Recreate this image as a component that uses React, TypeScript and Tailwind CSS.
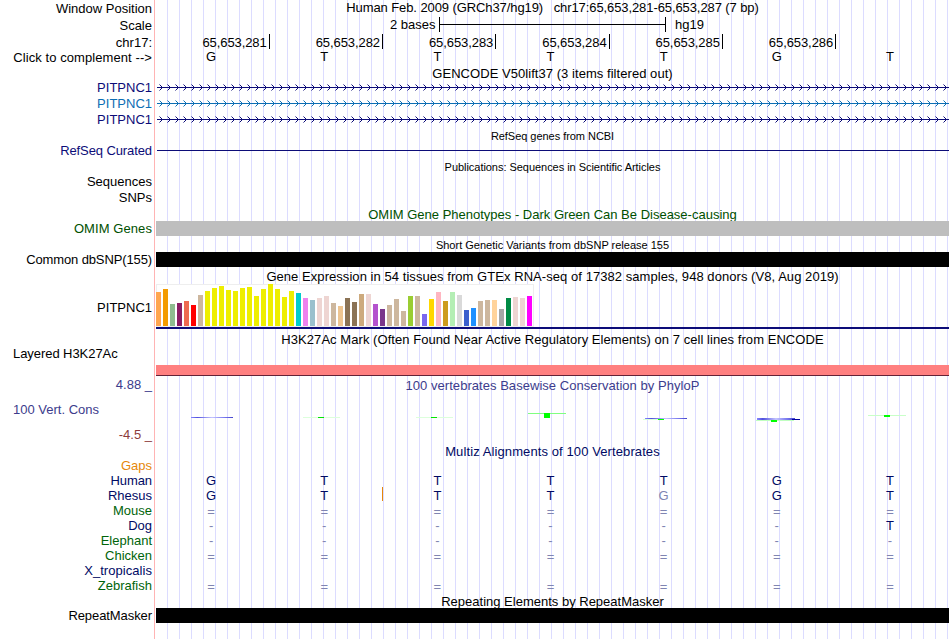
import React from "react";

const LABELS: [string, string][] = [
  ["Window Position", "mt-px"],
  ["Scale", "mt-[2px]"],
  ["chr17:", "mt-[2px]"],
  ["Click to complement -->", "tracking-[0.08px]"],
  ["PITPNC1", "mt-[15px] text-[#0c0c78]"],
  ["PITPNC1", "mt-px text-[#0c6eb4]"],
  ["PITPNC1", "mt-px text-[#0c0c78]"],
  ["RefSeq Curated", "mt-4 tracking-[-0.1px] text-[#0c0c78]"],
  ["Sequences", "mt-4"],
  ["SNPs", "mt-px"],
  ["OMIM Genes", "mt-4 tracking-[0.08px] text-[#005000]"],
  ["Common dbSNP(155)", "mt-4 tracking-[-0.12px]"],
  ["PITPNC1", "mt-[33px]"],
  ["Layered H3K27Ac", "mt-[31px] self-start tracking-[-0.06px]"],
  ["4.88 _", "mt-4 text-[#3c3c8c]"],
  ["100 Vert. Cons", "mt-2.5 self-start text-[#3c3c8c]"],
  ["-4.5 _", "mt-2.5 text-[#8c3c3c]"],
  ["Gaps", "mt-4 text-[#e6870a]"],
  ["Human", "tracking-[-0.1px] text-[#000a64]"],
  ["Rhesus", "text-[#000a64]"],
  ["Mouse", "text-[#00640a]"],
  ["Dog", "text-[#000a64]"],
  ["Elephant", "text-[#00640a]"],
  ["Chicken", "text-[#00640a]"],
  ["X_tropicalis", "tracking-[0.05px] text-[#000a64]"],
  ["Zebrafish", "text-[#00640a]"],
  ["RepeatMasker", "mt-[15px] tracking-[-0.08px]"],
];

const GTEX: [number, string][] = [
  [34, "#ffa54f"], [37, "#f39b00"], [22, "#8fbc8f"], [23, "#8b1c62"], [25, "#ee6a50"], [21, "#ff0000"], [31, "#cdb79e"],
  [35, "#eeee00"], [38, "#eeee00"], [40, "#eeee00"], [36, "#eeee00"], [35, "#eeee00"], [38, "#eeee00"], [39, "#eeee00"],
  [30, "#eeee00"], [37, "#eeee00"], [42, "#eeee00"], [37, "#eeee00"], [29, "#eeee00"], [35, "#eeee00"], [33, "#00cdcd"],
  [28, "#ee82ee"], [26, "#9ac0cd"], [28, "#eed5d2"], [30, "#eed5d2"], [23, "#cdb79e"], [20, "#eec591"], [28, "#8b7355"],
  [24, "#8b7355"], [32, "#cdaa7d"], [32, "#eed5d2"], [22, "#b452cd"], [17, "#7a378b"], [21, "#cdb79e"], [27, "#cdb79e"],
  [15, "#cdb79e"], [30, "#9acd32"], [30, "#cdb79e"], [12, "#7a67ee"], [27, "#ffd700"], [34, "#ffb6c1"], [25, "#cd9b1d"],
  [34, "#b4eeb4"], [31, "#d9d9d9"], [16, "#3a5fcd"], [18, "#1e90ff"], [25, "#cdb79e"], [26, "#cdb79e"], [26, "#ffd39b"],
  [17, "#a6a6a6"], [28, "#008b45"], [29, "#eed5d2"], [28, "#eed5d2"], [30, "#ff00ff"],
];

function Title({ children, className }: { children: React.ReactNode; className: string }) {
  return <div className={`h-[15px] text-center leading-[15px] whitespace-pre ${className}`}>{children}</div>;
}

function Bases({ seq, className }: { seq: string; className: string }) {
  return (
    <div className={`grid h-[15px] grid-cols-7 pr-px ${className}`}>
      {seq.split("").map((base, i) => (
        <span
          key={i}
          className={`pr-[3px] text-center ${base === "=" ? "pt-px text-[#8085b2]" : ""} ${
            base === "-" || base === "g" ? "text-[#8085b2]" : ""
          }`}
        >
          {base.toUpperCase()}
        </span>
      ))}
    </div>
  );
}

function Gene({ id, className }: { id: string; className: string }) {
  return (
    <svg width="793" height="7" className={`block ${className}`} shapeRendering="crispEdges">
      <defs>
        <pattern id={id} width="8" height="7" patternUnits="userSpaceOnUse">
          <path d="M3 0h1v1h-1zM3 6h1v1h-1z" fill="currentColor" opacity="0.5" />
          <path d="M4 1h1v1h-1zM5 2h1v1h-1zM6 3h1v1h-1zM5 4h1v1h-1zM4 5h1v1h-1z" fill="currentColor" />
        </pattern>
      </defs>
      <rect x="1" y="3" width="792" height="1" fill="currentColor" />
      <rect width="793" height="7" fill={`url(#${id})`} />
    </svg>
  );
}

function Conservation() {
  return (
    <svg width="793" height="20" className="mt-3 block" shapeRendering="crispEdges">
      <defs>
        <linearGradient id="dip">
          <stop offset="0" stopColor="#8888ff" />
          <stop offset="0.15" stopColor="#5050dd" />
          <stop offset="0.5" stopColor="#c4c4ff" />
          <stop offset="0.8" stopColor="#7777ee" />
          <stop offset="1" stopColor="#4444cc" />
        </linearGradient>
      </defs>
      <rect x="35" y="8" width="42" height="1" fill="url(#dip)" />
      <rect x="147" y="8" width="37" height="1" fill="#dcffdc" />
      <rect x="162" y="8" width="6" height="1" fill="#00e600" />
      <rect x="260" y="8" width="37" height="1" fill="#dcffdc" />
      <rect x="275" y="8" width="6" height="1" fill="#00e600" />
      <rect x="372" y="4" width="38" height="1" fill="#80ff80" />
      <rect x="388" y="4" width="6" height="5" fill="#00ff00" />
      <rect x="489" y="9" width="42" height="1" fill="url(#dip)" />
      <rect x="487" y="10" width="20" height="1" fill="#dcffdc" />
      <rect x="502" y="10" width="6" height="1" fill="#00ff00" />
      <rect x="601" y="9" width="38" height="2" fill="url(#dip)" />
      <rect x="636" y="10" width="8" height="1" fill="#0000a0" />
      <rect x="600" y="11" width="38" height="1" fill="#c0ffc0" />
      <rect x="615" y="11" width="6" height="2" fill="#00ff00" />
      <rect x="712" y="6" width="38" height="1" fill="#c8ffc8" />
      <rect x="728" y="6" width="6" height="2" fill="#00ff00" />
    </svg>
  );
}

export default function App() {
  return (
    <div className="flex h-[639px] w-[950px] overflow-hidden bg-white font-['Liberation_Sans',Arial,sans-serif] text-[13px] leading-[15px] text-black">
      <div className="flex w-[154px] shrink-0 flex-col items-end pr-[2px] pl-[13px]">
        {LABELS.map(([text, cls], i) => (
          <div key={i} className={`h-[15px] shrink-0 whitespace-pre ${cls}`}>
            {text}
          </div>
        ))}
      </div>
      <div className="mr-px w-px shrink-0 bg-[#ffb4b4]" />
      <div className="flex w-[793px] shrink-0 flex-col bg-[linear-gradient(to_right,transparent_11px,#dcdcff_11px)] bg-[length:12px_1px]">
        <Title className="tracking-[-0.09px]">
          {"Human Feb. 2009 (GRCh37/hg19)   chr17:65,653,281-65,653,287 (7 bp)"}
        </Title>
        <div className="mt-[2px] flex h-[15px] items-center pl-[234px]">
          <span className="w-[49px]">2 bases</span>
          <span className="flex h-[15px] w-[227px] items-center border-x border-black">
            <span className="h-px w-full bg-black" />
          </span>
          <span className="pl-[9px]">hg19</span>
        </div>
        <div className="mt-[2px] mr-[0.6px] -ml-[0.6px] grid h-[15px] grid-cols-7">
          {[1, 2, 3, 4, 5, 6].map((n) => (
            <div key={n} className="-mr-px flex justify-end">
              <span className="mt-px pr-[2px] tracking-[-0.08px]">65,653,28{n}</span>
              <span className="h-[15px] w-px bg-black" />
            </div>
          ))}
        </div>
        <Bases seq="GTTTTGT" className="" />
        <Title className="mt-[2px] tracking-[0.05px]">GENCODE V50lift37 (3 items filtered out)</Title>
        <Gene id="gene-a" className="mt-[3px] text-[#0c0c78]" />
        <Gene id="gene-b" className="mt-[9px] text-[#0c6eb4]" />
        <Gene id="gene-c" className="mt-[9px] text-[#0c0c78]" />
        <Title className="mt-[6px] text-[11px] tracking-[-0.04px]">RefSeq genes from NCBI</Title>
        <div className="mt-[6px] ml-px h-px bg-[#0c0c78]" />
        <Title className="mt-[9px] text-[11px] tracking-[-0.04px]">Publications: Sequences in Scientific Articles</Title>
        <Title className="mt-[32px] text-[#005000]">OMIM Gene Phenotypes - Dark Green Can Be Disease-causing</Title>
        <div className="-mt-px h-[15px] bg-[#bebebe]" />
        <Title className="mt-[2px] text-[11px]">Short Genetic Variants from dbSNP release 155</Title>
        <div className="-mt-px h-[15px] bg-black" />
        <Title className="mt-[2px] tracking-[0.055px]">
          Gene Expression in 54 tissues from GTEx RNA-seq of 17382 samples, 948 donors (V8, Aug 2019)
        </Title>
        <div className="flex h-[43px] w-[378px] items-end gap-[2px] bg-white shadow-[inset_0_0_0_1px_#eeeeee]">
          {GTEX.map(([height, color], i) => (
            <span key={i} className="mb-px w-[5px] shrink-0" style={{ height, backgroundColor: color }} />
          ))}
        </div>
        <div className="h-[2px] bg-[#0c0c78]" />
        <Title className="mt-[3px] tracking-[0.055px]">
          H3K27Ac Mark (Often Found Near Active Regulatory Elements) on 7 cell lines from ENCODE
        </Title>
        <div className="mt-[18px] h-[11px] border-b border-[#642337] bg-[#ff8080]" />
        <Title className="mt-[2px] tracking-[0.04px] text-[#3c3c8c]">
          100 vertebrates Basewise Conservation by PhyloP
        </Title>
        <div className="h-[51px]">
          <div className="h-[4px]" />
          <Conservation />
        </div>
        <Title className="tracking-[0.1px] text-[#000a64]">Multiz Alignments of 100 Vertebrates</Title>
        <Bases seq="GTTTTGT" className="mt-[14px] text-[#000a64]" />
        <div className="relative">
          <Bases seq="GTTTgGT" className="text-[#000a64]" />
          <span className="absolute top-[-1px] left-[226px] h-[14px] w-px bg-[#e6870a]" />
        </div>
        <Bases seq="=======" className="" />
        <Bases seq="------T" className="text-[#000a64]" />
        <Bases seq="-------" className="" />
        <Bases seq="=======" className="" />
        <Bases seq="       " className="" />
        <Bases seq="=======" className="" />
        <Title className="mt-px">Repeating Elements by RepeatMasker</Title>
        <div className="-mt-px h-[15px] shrink-0 bg-black" />
      </div>
    </div>
  );
}
